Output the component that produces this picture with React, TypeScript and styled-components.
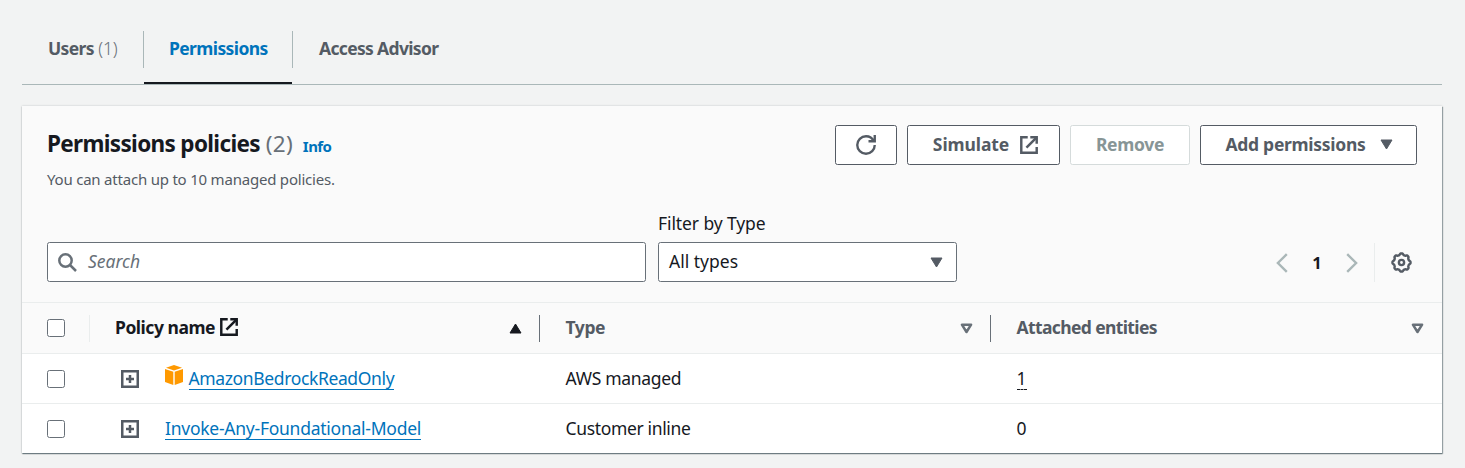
import React from "react";
import styled, { createGlobalStyle, css } from "styled-components";

const color = {
  ink: "#16191f",
  text: "#545b64",
  muted: "#687078",
  link: "#0073bb",
  line: "#eaeded",
  edge: "#aab7b8",
  header: "#fafafa",
};

const GlobalStyle = createGlobalStyle`
  * { box-sizing: border-box; }
  body {
    margin: 0;
    background: #f2f3f3;
    color: ${color.ink};
    font-family: "Noto Sans", "Open Sans", sans-serif;
    font-size: 17.5px;
    line-height: 27px;
    overflow: hidden;
  }
`;

const Page = styled.main`
  width: 1420px;
  height: 468px;
  margin-left: 22px;
  padding-top: 15px;
`;

const Tabs = styled.nav`
  display: flex;
  height: 70px;
  border-bottom: 1px solid ${color.edge};
`;

const Tab = styled.a<{ $active?: boolean; $track: number }>`
  position: relative;
  display: flex;
  align-items: flex-start;
  padding: 20px 24px 0 26px;
  font-weight: 700;
  white-space: pre;
  letter-spacing: ${(p) => p.$track}px;
  color: ${(p) => (p.$active ? color.link : color.text)};
  &:first-child { width: 122px; }
  &:nth-child(2) { width: 149px; padding-left: 25px; }
  &:not(:first-child)::before {
    content: "";
    position: absolute;
    left: -1px;
    top: 16px;
    height: 37px;
    width: 1px;
    background: ${color.edge};
  }
  ${(p) =>
    p.$active &&
    css`
      &::after {
        content: "";
        position: absolute;
        left: 0;
        right: 1px;
        bottom: 0;
        height: 2px;
        background: ${color.ink};
      }
    `}
`;

const TabCount = styled.span`
  margin-left: 4.5px;
  font-weight: 300;
  letter-spacing: -0.2px;
  color: ${color.muted};
`;

const Panel = styled.section`
  margin-top: 21px;
  background: #fff;
  box-shadow: 0 1px 1px 0 rgba(0, 28, 36, 0.3), 1px 1px 1px 0 rgba(0, 28, 36, 0.3), 0 0 2px 0 rgba(0, 28, 36, 0.2);
`;

const PanelHeader = styled.header`
  height: 197px;
  padding: 19px 25px 0;
  background: ${color.header};
  border-bottom: 1px solid ${color.line};
`;

const TitleRow = styled.div`
  display: flex;
  justify-content: space-between;
  height: 98px;
`;

const Title = styled.h2`
  display: flex;
  align-items: baseline;
  margin: 4px 0 0;
  font-size: 22.5px;
  line-height: 30px;
  letter-spacing: -0.66px;
`;

const Count = styled.span`
  margin-left: 6px;
  font-weight: 400;
  letter-spacing: 0.2px;
  color: ${color.muted};
`;

const Info = styled.a`
  margin-left: 10px;
  font-size: 15px;
  letter-spacing: -0.55px;
  color: ${color.link};
`;

const Description = styled.p`
  margin: 6px 0 0;
  font-size: 15px;
  line-height: 25px;
  letter-spacing: -0.21px;
  color: ${color.text};
`;

const Actions = styled.div`
  display: flex;
  gap: 10px;
`;

const Button = styled.button<{ $width: number; $track?: number }>`
  display: flex;
  align-items: center;
  justify-content: center;
  gap: 10px;
  width: ${(p) => p.$width}px;
  height: 40px;
  padding: 0 0 1px;
  border: 1px solid ${color.text};
  border-radius: 2.5px;
  background: #fff;
  color: ${color.text};
  font: inherit;
  font-weight: 700;
  letter-spacing: ${(p) => p.$track ?? 0}px;
  white-space: nowrap;
  &:disabled {
    border-color: #d5dbdb;
    color: #879596;
  }
`;

const ButtonText = styled.span<{ $before: number; $after: number }>`
  margin: 0 ${(p) => p.$after}px 0 ${(p) => p.$before}px;
`;

const Filters = styled.div`
  display: flex;
  align-items: flex-end;
  height: 59px;
`;

const Field = styled.div<{ $width: number }>`
  display: flex;
  align-items: center;
  width: ${(p) => p.$width}px;
  height: 40px;
  padding: 0 13px 0 10px;
  border: 1px solid ${color.muted};
  border-radius: 2.5px;
  background: #fff;
  color: ${color.text};
`;

const Placeholder = styled.span`
  margin: -1px 0 0 11px;
  font-style: italic;
  color: ${color.muted};
`;

const SelectGroup = styled.div`
  display: flex;
  flex-direction: column;
  margin-left: 12px;
`;

const SelectLabel = styled.label`
  height: 31px;
  line-height: 25px;
  letter-spacing: -0.1px;
`;

const SelectValue = styled.span`
  flex: 1;
  margin-top: -1px;
  color: ${color.ink};
`;

const Pager = styled.div`
  display: flex;
  align-items: center;
  height: 39px;
  margin-left: auto;
`;

const PageNumber = styled.span`
  width: 58px;
  text-align: center;
  font-size: 16.5px;
  font-weight: 700;
`;

const Settings = styled.span`
  display: flex;
  align-items: center;
  height: 39px;
  margin-left: 16px;
  padding: 0 5.5px 0 15.5px;
  border-left: 1px solid ${color.line};
`;

const Row = styled.div<{ $head?: boolean }>`
  display: grid;
  grid-template-columns: 68px 450px 451px 451px;
  align-items: center;
  height: ${(p) => (p.$head ? 51 : 50)}px;
  background: ${(p) => (p.$head ? color.header : "#fff")};
  border-bottom: 1px solid ${color.line};
  &:last-child {
    height: 49px;
    border-bottom: 0;
  }
`;

const HeadCell = styled.div<{ $divider?: string; $sorted?: boolean; $track?: number }>`
  display: flex;
  align-items: center;
  height: 27px;
  padding: 0 17.5px 0 25px;
  border-right: 1px solid ${(p) => p.$divider ?? "transparent"};
  font-weight: 700;
  letter-spacing: ${(p) => p.$track ?? 0}px;
  color: ${(p) => (p.$sorted ? color.ink : color.text)};
`;

const HeadLabel = styled.span<{ $linked?: boolean }>`
  display: flex;
  align-items: center;
  gap: 5px;
  flex: 1;
  padding-left: ${(p) => (p.$linked ? 0 : 0.5)}px;
  margin-top: ${(p) => (p.$linked ? -2 : -1)}px;
`;

const Cell = styled.div<{ $track?: number }>`
  display: flex;
  align-items: center;
  height: 49px;
  padding-left: 25.5px;
  letter-spacing: ${(p) => p.$track ?? 0}px;
`;

const CheckCell = styled(Cell)`
  padding-left: 25px;
`;

const NameCell = styled(Cell)`
  padding-left: 31px;
`;

const Checkbox = styled.span`
  width: 18px;
  height: 18px;
  border: 1px solid ${color.muted};
  border-radius: 2.5px;
  background: #fff;
`;

const PolicyLink = styled.a`
  height: 23px;
  line-height: 23px;
  border-bottom: 1px solid ${color.link};
  color: ${color.link};
`;

const EntityCount = styled.span`
  height: 23px;
  line-height: 23px;
  border-bottom: 1px dashed ${color.ink};
`;

const ExpandIcon = styled.svg`
  margin-right: 26px;
`;

const CubeIcon = styled.svg`
  margin: -7px 5.5px 0 0;
`;

const Refresh = () => (
  <svg width="20" height="20" viewBox="0 0 16 16" fill="none" stroke="currentColor" strokeWidth="1.9">
    <path d="M15 8c0 3.87-3.13 7-7 7s-7-3.13-7-7 3.13-7 7-7c2.79 0 5.2 1.63 6.33 4" />
    <path d="M10 5h5V0" />
  </svg>
);

const External = ({ size = 18 }: { size?: number }) => (
  <svg width={size} height={size} viewBox="0 0 14 14" fill="none" stroke="currentColor" strokeWidth="1.9">
    <path d="M6 1H1v12h12V8.5" />
    <path d="M8 1h5v5" />
    <path d="M13 1 5 9" />
  </svg>
);

const Caret = ({ up }: { up?: boolean }) => (
  <svg width="13" height="11" viewBox="0 0 13 11" fill="currentColor" stroke="currentColor" strokeLinejoin="round">
    <path d={up ? "M6.5 1 12 10H1z" : "M6.5 10 1 1h11z"} />
  </svg>
);

const SortIcon = () => (
  <svg width="13" height="11" viewBox="0 0 13 11" fill="none" stroke={color.muted} strokeWidth="2.5" strokeLinejoin="round">
    <path d="M6.5 9 1.9 1.7h9.2z" />
  </svg>
);

const Magnifier = () => (
  <svg width="19" height="19" viewBox="0 0 19 19" fill="none" stroke={color.muted} strokeWidth="2.5">
    <circle cx="7.5" cy="7.5" r="6.2" />
    <path d="m12 12 6 6" />
  </svg>
);

const Chevron = ({ right }: { right?: boolean }) => (
  <svg width="12" height="20" viewBox="0 0 12 20" fill="none" stroke={color.edge} strokeWidth="2.4">
    <path d={right ? "m1.2 1.2 8.9 8.8-8.9 8.8" : "m10.8 1.2-8.9 8.8 8.9 8.8"} />
  </svg>
);

const gearPath = (() => {
  const steps = 96;
  const points = Array.from({ length: steps }, (_, i) => {
    const a = (i / steps) * Math.PI * 2;
    const r = 8.35 + 0.7 * Math.max(-1, Math.min(1, 1.5 * Math.cos(8 * a)));
    return `${(10.5 + r * Math.cos(a)).toFixed(2)} ${(10.5 + r * Math.sin(a)).toFixed(2)}`;
  });
  return `M${points.join("L")}Z`;
})();

const Gear = () => (
  <svg width="21" height="21" viewBox="0 0 21 21" fill="none" stroke={color.text} strokeWidth="2.4">
    <path d={gearPath} strokeLinejoin="round" />
    <circle cx="10.5" cy="10.5" r="2.6" />
  </svg>
);

const Expand = () => (
  <ExpandIcon width="18" height="18" viewBox="0 0 18 18" fill="none" stroke={color.text} strokeWidth="2.5">
    <path d="M1.25 1.25h15.5v15.5H1.25zM9 5v8M5 9h8" />
  </ExpandIcon>
);

const Cube = () => (
  <CubeIcon width="18" height="20" viewBox="0 0 18 20" fill="#ff9900">
    <path d="M9 0 17 2.7 9 5.4 1 2.7z" />
    <path d="M0 4l8.3 2.8V20L0 17z" />
    <path d="M18 4 9.7 6.8V20L18 17z" />
  </CubeIcon>
);

const policies = [
  { name: "AmazonBedrockReadOnly", nameTrack: -0.37, managed: true, type: "AWS managed", typeTrack: -0.3, entities: 1 },
  { name: "Invoke-Any-Foundational-Model", nameTrack: -0.25, managed: false, type: "Customer inline", typeTrack: -0.35, entities: 0 },
];

export default function App() {
  return (
    <>
      <GlobalStyle />
      <Page>
        <Tabs>
          <Tab $track={-0.65}>
            Users<TabCount>(1)</TabCount>
          </Tab>
          <Tab $active $track={-0.6}>Permissions</Tab>
          <Tab $track={-0.67}>Access Advisor</Tab>
        </Tabs>
        <Panel>
          <PanelHeader>
            <TitleRow>
              <div>
                <Title>
                  Permissions policies<Count>(2)</Count>
                  <Info>Info</Info>
                </Title>
                <Description>You can attach up to 10 managed policies.</Description>
              </div>
              <Actions>
                <Button $width={62} aria-label="Refresh"><Refresh /></Button>
                <Button $width={153} $track={-0.1}>
                  <ButtonText $before={4} $after={1}>Simulate</ButtonText>
                  <External />
                </Button>
                <Button $width={120} $track={-0.3} disabled>Remove</Button>
                <Button $width={217} $track={-0.28}>
                  <ButtonText $before={1} $after={4}>Add permissions</ButtonText>
                  <Caret />
                </Button>
              </Actions>
            </TitleRow>
            <Filters>
              <Field $width={599}>
                <Magnifier />
                <Placeholder>Search</Placeholder>
              </Field>
              <SelectGroup>
                <SelectLabel>Filter by Type</SelectLabel>
                <Field $width={299}>
                  <SelectValue>All types</SelectValue>
                  <Caret />
                </Field>
              </SelectGroup>
              <Pager>
                <Chevron />
                <PageNumber>1</PageNumber>
                <Chevron right />
                <Settings><Gear /></Settings>
              </Pager>
            </Filters>
          </PanelHeader>
          <Row $head>
            <HeadCell $divider={color.line}><Checkbox /></HeadCell>
            <HeadCell $divider={color.muted} $sorted $track={-0.47}>
              <HeadLabel $linked>Policy name<External size={18} /></HeadLabel>
              <Caret up />
            </HeadCell>
            <HeadCell $divider={color.muted} $track={-0.4}>
              <HeadLabel>Type</HeadLabel>
              <SortIcon />
            </HeadCell>
            <HeadCell $track={-0.62}>
              <HeadLabel>Attached entities</HeadLabel>
              <SortIcon />
            </HeadCell>
          </Row>
          {policies.map((p) => (
            <Row key={p.name}>
              <CheckCell><Checkbox /></CheckCell>
              <NameCell $track={p.nameTrack}>
                <Expand />
                {p.managed && <Cube />}
                <PolicyLink>{p.name}</PolicyLink>
              </NameCell>
              <Cell $track={p.typeTrack}>{p.type}</Cell>
              <Cell>{p.entities > 0 ? <EntityCount>{p.entities}</EntityCount> : p.entities}</Cell>
            </Row>
          ))}
        </Panel>
      </Page>
    </>
  );
}
